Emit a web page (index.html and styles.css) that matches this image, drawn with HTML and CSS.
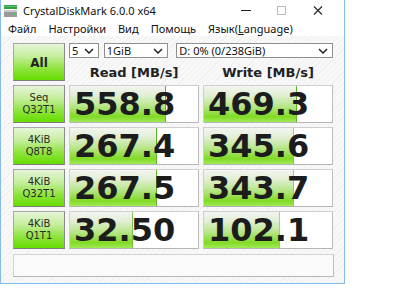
FILE: index.html
```html
<!DOCTYPE html>
<html>
<head>
<meta charset="utf-8">
<link rel="stylesheet" href="styles.css">
</head>
<body>
<div class="window">
  <div class="titlebar">
    <svg class="appicon" width="13" height="12" viewBox="0 0 13 12">
      <rect x="0" y="0" width="13" height="4" fill="#2f9e44"/>
      <rect x="0" y="1" width="13" height="1" fill="#5cc46a"/>
      <rect x="0" y="5" width="13" height="7" fill="#9a9a9a"/>
      <rect x="0" y="5" width="13" height="2" fill="#c8c8c8"/>
      <rect x="9" y="8" width="2" height="2" fill="#3ad04a"/>
    </svg>
    <span class="title">CrystalDiskMark 6.0.0 x64</span>
    <div class="winbtns">
      <svg class="wb" width="34" height="20" viewBox="0 0 34 20"><line x1="12" y1="10.5" x2="22" y2="10.5" stroke="#222" stroke-width="1"/></svg>
      <svg class="wb" width="34" height="20" viewBox="0 0 34 20"><rect x="12.5" y="6.5" width="8" height="8" fill="none" stroke="#bbb" stroke-width="1"/></svg>
      <svg class="wb" width="34" height="20" viewBox="0 0 34 20"><path d="M13 6.5 L21 14.5 M21 6.5 L13 14.5" stroke="#222" stroke-width="1.1"/></svg>
    </div>
  </div>
  <div class="menubar">
    <span class="mi">Файл</span>
    <span class="mi">Настройки</span>
    <span class="mi">Вид</span>
    <span class="mi">Помощь</span>
    <span class="mi">Язык(<u>L</u>anguage)</span>
  </div>
  <div class="content">
    <div class="grid">
      <div class="btn all">All</div>
      <div class="selects">
        <div class="sel s1"><span>5</span><svg width="10" height="6" viewBox="0 0 10 6"><path d="M1 1 L5 5 L9 1" fill="none" stroke="#222" stroke-width="1.5"/></svg></div>
        <div class="sel s2"><span>1GiB</span><svg width="10" height="6" viewBox="0 0 10 6"><path d="M1 1 L5 5 L9 1" fill="none" stroke="#222" stroke-width="1.5"/></svg></div>
        <div class="sel s3"><span>D: 0% (0/238GiB)</span><svg width="10" height="6" viewBox="0 0 10 6"><path d="M1 1 L5 5 L9 1" fill="none" stroke="#222" stroke-width="1.5"/></svg></div>
      </div>
      <div class="head">Read [MB/s]</div>
      <div class="head">Write [MB/s]</div>

      <div class="btn label">Seq<br>Q32T1</div>
      <div class="val" style="--w:75%">558.8</div>
      <div class="val" style="--w:73%">469.3</div>

      <div class="btn label">4KiB<br>Q8T8</div>
      <div class="val" style="--w:68%">267.4</div>
      <div class="val" style="--w:70%">345.6</div>

      <div class="btn label">4KiB<br>Q32T1</div>
      <div class="val" style="--w:68%">267.5</div>
      <div class="val" style="--w:70%">343.7</div>

      <div class="btn label">4KiB<br>Q1T1</div>
      <div class="val" style="--w:49%">32.50</div>
      <div class="val" style="--w:59%">102.1</div>
    </div>
    <div class="status"></div>
  </div>
</div>
</body>
</html>
```

FILE: styles.css
```css
html, body {
  margin: 0;
  padding: 0;
  background: #ffffff;
}
body {
  width: 400px;
  height: 300px;
  overflow: hidden;
  font-family: "Noto Sans", "DejaVu Sans", sans-serif;
}
.window {
  width: 343px;
  height: 283px;
  border: 1px solid #86bbe9;
  border-top: none;
  display: flex;
  flex-direction: column;
  background: #fff;
}
.titlebar {
  height: 20px;
  display: flex;
  align-items: center;
  padding-left: 3px;
  background: #fff;
}
.appicon {
  margin-top: 2px;
}
.title {
  margin-left: 6px;
  font-size: 11px;
  color: #111;
  margin-top: 1px;
}
.winbtns {
  margin-left: auto;
  display: flex;
  gap: 2px;
  margin-right: 9px;
}
.menubar {
  height: 16px;
  display: flex;
  align-items: center;
  padding-left: 1px;
  background: #fff;
}
.mi {
  font-size: 11px;
  color: #111;
  padding: 0 6px;
}
.mi u {
  text-decoration-thickness: 1px;
}
.content {
  flex: 1;
  padding: 7px 0 0 12px;
  background: repeating-linear-gradient(135deg, #f8f8f8 0px, #f8f8f8 3px, #f1f1f1 3px, #f1f1f1 4px);
}
.grid {
  display: grid;
  grid-template-columns: 52px 130px 130px;
  grid-template-rows: 15px 19px repeat(4, 38px);
  column-gap: 4px;
  row-gap: 4px;
}
.btn {
  box-sizing: border-box;
  border: 1px solid #a7a7a7;
  border-bottom-color: #7d7d7d;
  border-right-color: #8a8a8a;
  background: linear-gradient(180deg, #e6f5d8 0%, #c4ee9c 35%, #8de33a 70%, #66dd00 100%);
  display: flex;
  align-items: center;
  justify-content: center;
  text-align: center;
  color: #222;
}
.all {
  grid-row: 1 / 3;
  font-family: "DejaVu Sans", sans-serif;
  font-weight: bold;
  font-size: 12px;
  padding-top: 2px;
}
.label {
  font-family: "DejaVu Sans", sans-serif;
  font-size: 10px;
  line-height: 12px;
  color: #2a2a2a;
}
.selects {
  grid-column: 2 / 4;
  display: flex;
  align-items: stretch;
}
.sel {
  box-sizing: border-box;
  height: 15px;
  border: 1px solid #8f8f8f;
  background: #fff;
  display: flex;
  align-items: center;
  justify-content: space-between;
  padding: 0 4px 0 2px;
  font-size: 11px;
  color: #111;
}
.s1 { width: 30px; }
.s2 { width: 65px; margin-left: 5px; }
.s3 { width: 158px; margin-left: 8px; }
.head {
  font-family: "DejaVu Sans", sans-serif;
  font-weight: bold;
  font-size: 13px;
  color: #222;
  text-align: center;
  line-height: 19px;
  padding-top: 1px;
}
.val {
  --w: 50%;
  box-sizing: border-box;
  border: 1px solid #cfcfcf;
  border-bottom-color: #b5b5b5;
  border-right-color: #bdbdbd;
  background-color: #fff;
  background-image:
    linear-gradient(90deg, transparent calc(100% - 1px), #5fb32a calc(100% - 1px)),
    linear-gradient(180deg, #f3f5f1 0%, #e2efd5 25%, #b9e68c 55%, #82da26 85%, #a0ea55 100%);
  background-size: var(--w) 100%, var(--w) 100%;
  background-repeat: no-repeat;
  font-family: "DejaVu Sans", sans-serif;
  font-weight: bold;
  font-size: 32px;
  color: #1c1c1c;
  display: flex;
  align-items: center;
  padding-left: 4px;
  line-height: 1;
}
.status {
  box-sizing: border-box;
  width: 321px;
  height: 23px;
  margin-top: 5px;
  border: 1px solid #d3d3d3;
  border-bottom-color: #b5b5b5;
  border-right-color: #bdbdbd;
  background: #fafafa;
}
```
